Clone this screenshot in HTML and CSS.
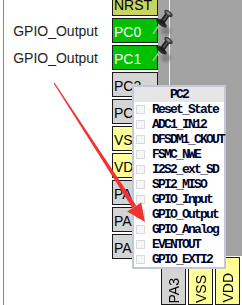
FILE: index.html
```html
<!DOCTYPE html>
<html>
<head>
<meta charset="utf-8">
<link rel="stylesheet" href="styles.css">
</head>
<body>
<div class="screen">
  <div class="rail"></div>
  <div class="labels">
    <div class="label"></div>
    <div class="label">GPIO_Output</div>
    <div class="label">GPIO_Output</div>
  </div>
  <div class="pins">
    <div class="pin nrst">NRST</div>
    <div class="pin green">PC0</div>
    <div class="pin green">PC1</div>
    <div class="pin gray">PC2</div>
    <div class="pin gray">PC3</div>
    <div class="pin yellow">VSS</div>
    <div class="pin yellow">VDD</div>
    <div class="pin gray">PA0</div>
    <div class="pin gray">PA1</div>
    <div class="pin gray">PA2</div>
  </div>
  <div class="chip">
    <div class="die"><div class="edge"></div></div>
    <div class="bottom-pins">
      <div class="vpin gray"><span>PA3</span></div>
      <div class="vpin yellow"><span>VSS</span></div>
      <div class="vpin yellow"><span>VDD</span></div>
    </div>
  </div>

  <svg class="pushpin p1" width="26" height="30" viewBox="0 0 26 30">
    <defs><filter id="bl1" x="-50%" y="-50%" width="200%" height="200%"><feGaussianBlur stdDeviation="1.6"/></filter></defs>
    <ellipse cx="16" cy="24" rx="5" ry="4" fill="#555" opacity="0.45" filter="url(#bl1)"/>
    <line x1="10" y1="17" x2="3" y2="27" stroke="#b0b0b0" stroke-width="1.6"/>
    <ellipse cx="11.5" cy="16" rx="6.5" ry="2.6" transform="rotate(38 11.5 16)" fill="#2a2a2a"/>
    <polygon points="9.5,14.5 13.5,17.5 20,8.5 16,5.5" fill="#1c1c1c"/>
    <polygon points="12.5,13 14,14 19,7.5 17.5,6.5" fill="#5a5a5a"/>
    <ellipse cx="18.5" cy="6.5" rx="4.8" ry="2.4" transform="rotate(38 18.5 6.5)" fill="#3a3a3a"/>
    <ellipse cx="18.3" cy="6.2" rx="2.6" ry="1.2" transform="rotate(38 18.3 6.2)" fill="#8c8c8c"/>
  </svg>
  <svg class="pushpin p2" width="26" height="30" viewBox="0 0 26 30">
    <defs><filter id="bl2" x="-50%" y="-50%" width="200%" height="200%"><feGaussianBlur stdDeviation="1.6"/></filter></defs>
    <ellipse cx="16" cy="24" rx="5" ry="4" fill="#555" opacity="0.45" filter="url(#bl2)"/>
    <line x1="10" y1="17" x2="3" y2="27" stroke="#b0b0b0" stroke-width="1.6"/>
    <ellipse cx="11.5" cy="16" rx="6.5" ry="2.6" transform="rotate(38 11.5 16)" fill="#2a2a2a"/>
    <polygon points="9.5,14.5 13.5,17.5 20,8.5 16,5.5" fill="#1c1c1c"/>
    <polygon points="12.5,13 14,14 19,7.5 17.5,6.5" fill="#5a5a5a"/>
    <ellipse cx="18.5" cy="6.5" rx="4.8" ry="2.4" transform="rotate(38 18.5 6.5)" fill="#3a3a3a"/>
    <ellipse cx="18.3" cy="6.2" rx="2.6" ry="1.2" transform="rotate(38 18.3 6.2)" fill="#8c8c8c"/>
  </svg>

  <div class="menu">
    <div class="menu-title">PC2</div>
    <div class="item"><span class="box"></span>Reset_State</div>
    <div class="item"><span class="box"></span>ADC1_IN12</div>
    <div class="item"><span class="box"></span>DFSDM1_CKOUT</div>
    <div class="item"><span class="box"></span>FSMC_NWE</div>
    <div class="item"><span class="box"></span>I2S2_ext_SD</div>
    <div class="item"><span class="box"></span>SPI2_MISO</div>
    <div class="item"><span class="box"></span>GPIO_Input</div>
    <div class="item"><span class="box"></span>GPIO_Output</div>
    <div class="item"><span class="box"></span>GPIO_Analog</div>
    <div class="item"><span class="box"></span>EVENTOUT</div>
    <div class="item"><span class="box"></span>GPIO_EXTI2</div>
  </div>

  <svg class="arrow" width="242" height="305" viewBox="0 0 242 305">
    <polygon points="53.6,83.3 54.6,82.7 136.2,205.6 132.4,208.0" fill="#ee3333"/>
    <polygon points="145,222 127.2,211.5 141.2,202.4" fill="#ee3333"/>
  </svg>
</div>
</body>
</html>
```

FILE: styles.css
```css
html, body {
  margin: 0;
  padding: 0;
  background: #fff;
}
.screen {
  position: relative;
  width: 242px;
  height: 305px;
  overflow: hidden;
  display: flex;
  background: #fff;
}
.rail {
  width: 1px;
  margin-left: 3px;
  background: #8a8a8a;
}
.labels {
  width: 94px;
  margin-right: 14px;
  margin-top: -9px;
  display: flex;
  flex-direction: column;
  gap: 2px;
}
.label {
  height: 25px;
  line-height: 27px;
  text-align: right;
  font-family: "Liberation Sans", Arial, sans-serif;
  font-size: 14px;
  color: #1e1e1e;
}
.pins {
  width: 46px;
  margin-top: -9px;
  display: flex;
  flex-direction: column;
  gap: 2px;
}
.pin {
  box-sizing: border-box;
  height: 25px;
  border: 1px solid #1a1a1a;
  padding-left: 1px;
  line-height: 26px;
  font-family: "Liberation Sans", Arial, sans-serif;
  font-size: 14px;
  color: #000;
  overflow: hidden;
  white-space: nowrap;
}
.nrst { background: #c9d462; }
.green { background: #00c000; color: #fff; }
.gray { background: #d4d4d4; }
.yellow { background: #ffff99; }

.chip {
  flex: 1;
  display: flex;
  flex-direction: column;
}
.die {
  height: 261px;
  background: #a3a3a3;
  display: flex;
}
.edge {
  width: 1px;
  margin-left: 11px;
  background: #f4f4f4;
}
.bottom-pins {
  display: flex;
  gap: 2px;
  padding-left: 3px;
  padding-top: 1px;
}
.vpin {
  box-sizing: border-box;
  width: 25px;
  height: 48px;
  border: 1px solid #1a1a1a;
  display: flex;
  align-items: flex-end;
  justify-content: center;
  padding-bottom: 1px;
}
.vpin span {
  writing-mode: vertical-rl;
  transform: rotate(180deg);
  font-family: "Liberation Sans", Arial, sans-serif;
  font-size: 14px;
  line-height: 16px;
  color: #000;
}

.pushpin {
  position: absolute;
  left: 150px;
}
.p1 { top: 7px; }
.p2 { top: 34px; }

.menu {
  position: absolute;
  left: 132px;
  top: 85px;
  width: 90px;
  border: 2px solid #c4c8d4;
  background: #fff;
}
.menu-title {
  height: 15px;
  line-height: 15px;
  background: #e6e6e6;
  text-align: center;
  font-family: "Liberation Mono", "Courier New", monospace;
  font-size: 13px;
  font-weight: bold;
  letter-spacing: -1.8px;
  color: #000020;
}
.item {
  height: 15px;
  display: flex;
  align-items: center;
  font-family: "Liberation Mono", "Courier New", monospace;
  font-size: 13px;
  font-weight: bold;
  letter-spacing: -1.8px;
  color: #000028;
  white-space: nowrap;
}
.box {
  box-sizing: border-box;
  width: 9px;
  height: 9px;
  margin-left: 2px;
  margin-right: 7px;
  border: 1px solid #dadada;
  background: #f6f6f6;
}
.arrow {
  position: absolute;
  left: 0;
  top: 0;
}
```
